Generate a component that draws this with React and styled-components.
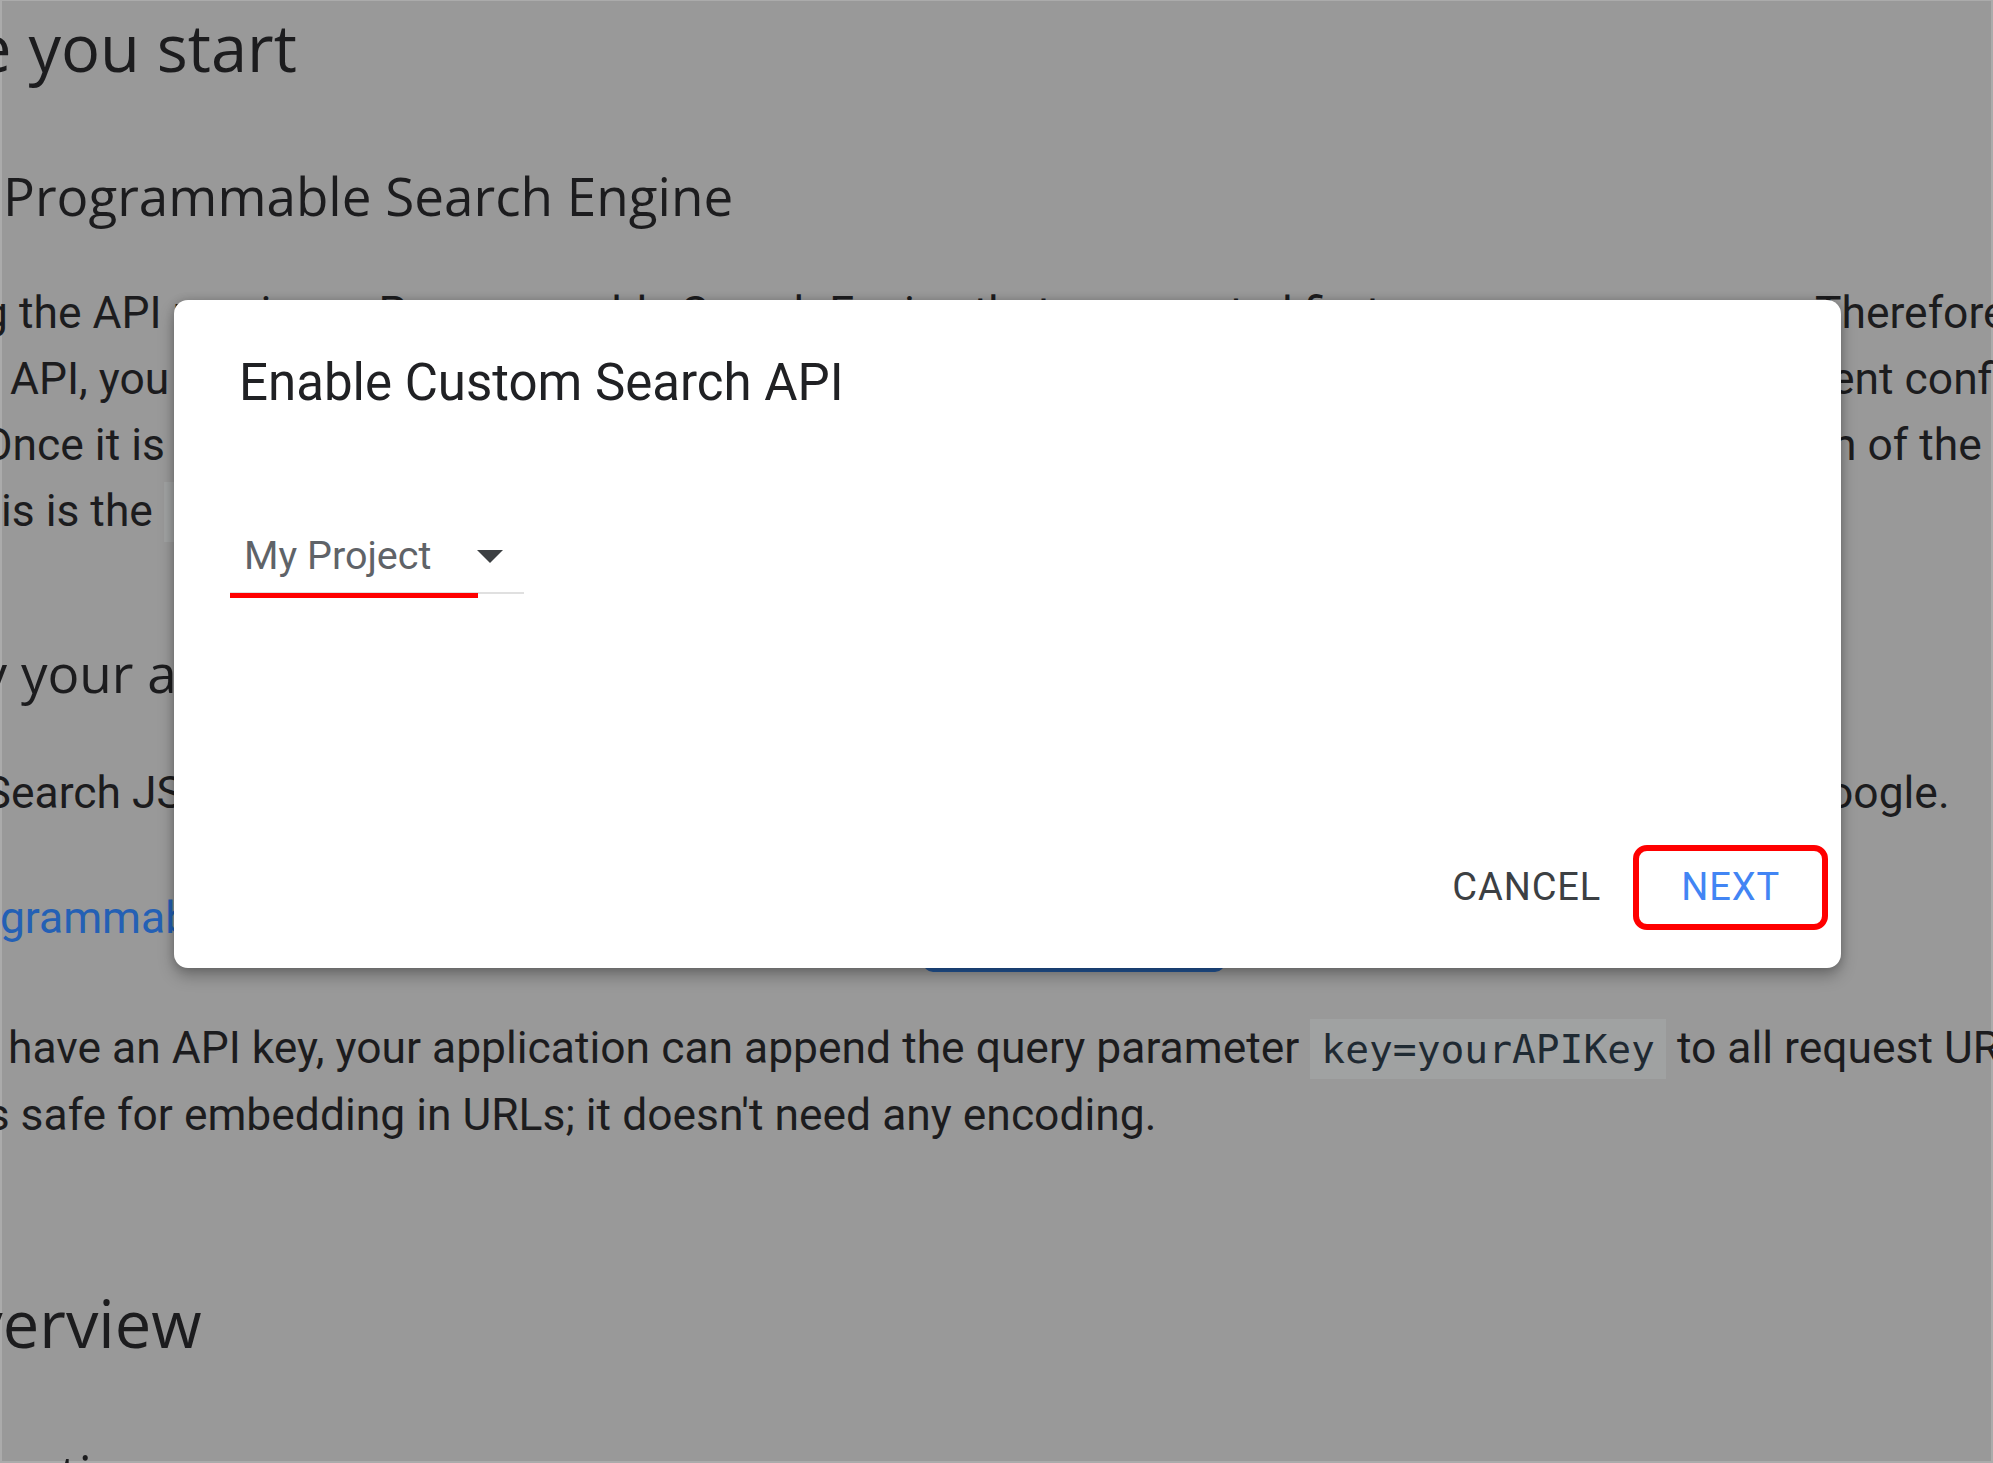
import React from 'react';
import styled, { createGlobalStyle } from 'styled-components';

const GlobalStyle = createGlobalStyle`
  html, body {
    margin: 0;
    padding: 0;
    background: #999999;
  }
  body {
    font-family: Roboto, "Liberation Sans", sans-serif;
  }
`;

const Screen = styled.div`
  position: relative;
  width: 1993px;
  height: 1463px;
  overflow: hidden;
  background: #999999;
  box-shadow: inset 2px 1px 0 #ababab, inset -2px -2px 0 #ababab;
`;

const Doc = styled.main`
  padding-top: 7px;
  color: #1c1c1e;
`;

const H2 = styled.h2`
  margin: ${(p) => p.$mt || 0}px 0 0;
  font: 400 65px/80px "Open Sans", sans-serif;
  text-indent: ${(p) => p.$indent || 0}px;
  white-space: nowrap;
`;

const H3 = styled.h3`
  margin: ${(p) => p.$mt || 0}px 0 0;
  font: 400 53px/66px "Open Sans", sans-serif;
  text-indent: ${(p) => p.$indent || 0}px;
  white-space: nowrap;
`;

const Para = styled.div`
  margin-top: ${(p) => p.$mt || 0}px;
  font: 400 44.4px/66px Roboto, sans-serif;
`;

const Line = styled.div`
  display: grid;
  grid-template-columns: ${(p) => (p.$split ? `${p.$split}px max-content` : 'max-content')};
  white-space: nowrap;
`;

const Lead = styled.span`
  display: block;
  overflow: hidden;
  text-indent: ${(p) => p.$indent || 0}px;
`;

const Tail = styled.span`
  display: block;
`;

const Code = styled.code`
  font-family: "DejaVu Sans Mono", monospace;
  font-size: 39.6px;
  background: #a0a2a2;
  color: #1f2a33;
  padding: 7px 11px;
`;

const Link = styled.span`
  color: #2460b5;
`;

const LinkRow = styled.div`
  margin-top: ${(p) => p.$mt || 0}px;
  display: grid;
  grid-template-columns: 923px 302px;
  grid-template-rows: 66px;
  align-items: center;
  height: 66px;
  font: 400 44.4px/66px Roboto, sans-serif;
  white-space: nowrap;
`;

const KeyButton = styled.span`
  display: flex;
  align-items: center;
  justify-content: center;
  height: 108px;
  border-radius: 10px;
  background: #24589c;
  color: #999;
  font-weight: 500;
`;

const Dialog = styled.section`
  position: absolute;
  left: 174px;
  top: 300px;
  width: 1667px;
  height: 668px;
  box-sizing: border-box;
  padding: 53px 13px 38px 56px;
  display: flex;
  flex-direction: column;
  background: #ffffff;
  border-radius: 14px;
  box-shadow: 0 8px 16px rgba(0, 0, 0, 0.28), 0 0 8px rgba(0, 0, 0, 0.18);
`;

const Title = styled.h1`
  margin: 0 0 0 9px;
  font: 400 51px/60px Roboto, sans-serif;
  color: #202124;
`;

const Select = styled.div`
  position: relative;
  margin-top: 115px;
  width: 294px;
  box-sizing: border-box;
  padding: 0 21px 8px 14px;
  display: flex;
  align-items: center;
  justify-content: space-between;
  border-bottom: 2px solid #e0e0e0;
  font: 400 39.5px/56px Roboto, sans-serif;
  color: #5f6368;
`;

const RedMark = styled.span`
  position: absolute;
  left: 0;
  bottom: -6px;
  width: 248px;
  height: 5px;
  background: #ff0000;
`;

const Actions = styled.div`
  margin-top: auto;
  display: flex;
  justify-content: flex-end;
  align-items: center;
  gap: 12px;
`;

const TextButton = styled.button`
  height: 73px;
  padding: 0 ${(p) => p.$pad}px;
  border: none;
  background: none;
  font: 400 38px/73px Roboto, sans-serif;
  letter-spacing: 0.9px;
  color: ${(p) => p.$color};
`;

const Highlight = styled.span`
  display: flex;
  border: 6px solid #ff0000;
  border-radius: 14px;
`;

const Arrow = () => (
  <svg width="26" height="13" viewBox="0 0 26 13">
    <path d="M0 0 L26 0 L13 13 Z" fill="#3c4043" />
  </svg>
);

export default function App() {
  return (
    <>
      <GlobalStyle />
      <Screen>
        <Doc>
          <H2 $indent={-191}>Before you start</H2>
          <H3 $mt={76} $indent={3}>Programmable Search Engine</H3>
          <Para $mt={51}>
            <Line $split={1815}>
              <Lead $indent={-104}>Using the API requires a Programmable Search Engine that you created first.</Lead>
              <Tail>Therefore, before using the</Tail>
            </Line>
            <Line $split={1831}>
              <Lead $indent={10}>API, you need to create one in the Programmable Search Engine control panel. Follow the tutorial to learn more about differ</Lead>
              <Tail>ent configuration options.</Tail>
            </Line>
            <Line $split={1832}>
              <Lead $indent={-18}>Once it is created, you can find the Search engine ID in the Basic sectio</Lead>
              <Tail>n of the Overview page.</Tail>
            </Line>
            <Line>
              <Lead $indent={-50}>This is the <Code>cx</Code> parameter used by the API.</Lead>
            </Line>
          </Para>
          <H3 $mt={95} $indent={-179}>Identify your application to Google with API key</H3>
          <Para $mt={54}>
            <Line $split={1828}>
              <Lead $indent={-181}>Custom Search JSON API requires the use of an API key. An API key is a way to identify your client to G</Lead>
              <Tail>oogle.</Tail>
            </Line>
          </Para>
          <LinkRow $mt={59}>
            <Lead $indent={-68}><Link>Programmable Search Engine</Link> (free edition) users:</Lead>
            <KeyButton>Get a Key</KeyButton>
          </LinkRow>
          <Para $mt={64}>
            <Line>
              <Lead $indent={-182}>
                After you have an API key, your application can append the query parameter <Code>key=yourAPIKey</Code> to all request URLs.
              </Lead>
            </Line>
            <Line>
              <Lead $indent={-267}>The API key is safe for embedding in URLs; it doesn't need any encoding.</Lead>
            </Line>
          </Para>
          <H2 $mt={135} $indent={-184}>API overview</H2>
          <H3 $mt={78} $indent={-95}>Operations</H3>
        </Doc>

        <Dialog role="dialog" aria-label="Enable Custom Search API">
          <Title>Enable Custom Search API</Title>
          <Select>
            <span>My Project</span>
            <Arrow />
            <RedMark />
          </Select>
          <Actions>
            <TextButton $pad={20} $color="#3c4043">CANCEL</TextButton>
            <Highlight>
              <TextButton $pad={42} $color="#4285f4">NEXT</TextButton>
            </Highlight>
          </Actions>
        </Dialog>
      </Screen>
    </>
  );
}
